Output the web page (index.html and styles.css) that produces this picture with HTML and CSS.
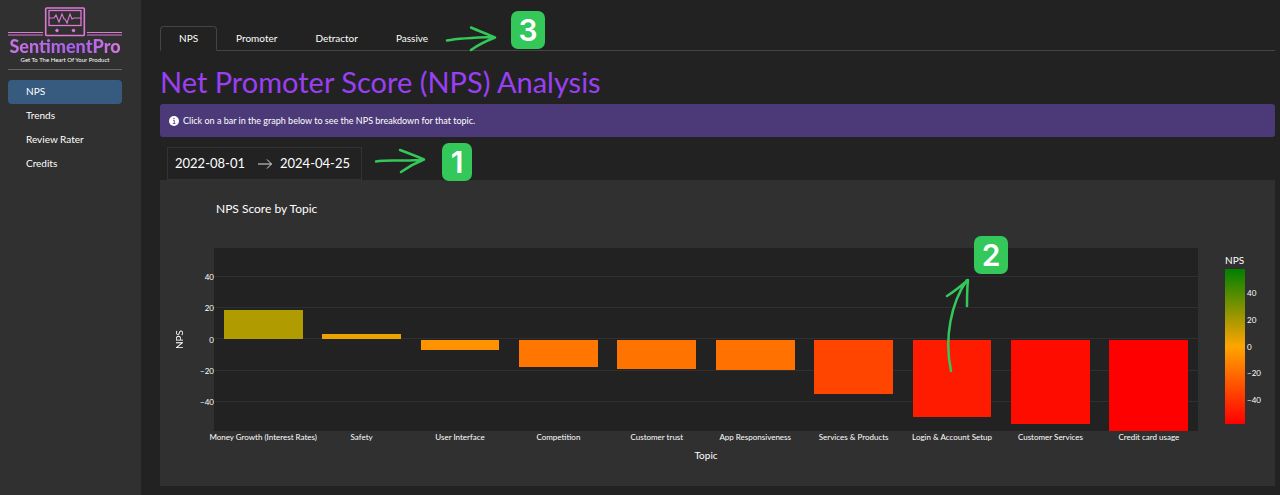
FILE: index.html
```html
<!DOCTYPE html>
<html lang="en">
<head>
<meta charset="utf-8">
<meta name="viewport" content="width=device-width, initial-scale=1">
<title>SentimentPro</title>
<link rel="stylesheet" href="styles.css">
</head>
<body>
<div class="app">
  <aside class="sidebar">
    <div class="logo">
      <svg class="logo-mark" viewBox="0 0 114 30" fill="none" stroke="#dc79d5" aria-hidden="true">
        <path d="M0 25.500h35M0 28h35M79 25.500h35M79 28h35" stroke-width="1.2"/>
        <rect x="37.700" y="1" width="38.600" height="27.500" rx="1" stroke-width="1.6"/>
        <rect x="41" y="3.500" width="32" height="15" stroke-width="1.3"/>
        <path d="M41 11h5l2-3 3 7 3-8 2 5h1l2 4 3-9 2 5 2-1h7" stroke-width="1.1"/>
        <circle cx="49" cy="23.500" r="1.3" fill="#dc79d5"/><circle cx="65.500" cy="23.500" r="1.3" fill="#dc79d5"/>
      </svg>
      <div class="logo-name">SentimentPro</div>
      <div class="logo-tag">Get To The Heart Of Your Product</div>
    </div>
    <nav class="nav">
      <a class="nav-link active" href="#nps">NPS</a>
      <a class="nav-link" href="#trends">Trends</a>
      <a class="nav-link" href="#rater">Review Rater</a>
      <a class="nav-link" href="#credits">Credits</a>
    </nav>
  </aside>

  <main class="main">
    <div class="tabs" role="tablist">
      <button class="tab selected" role="tab" aria-selected="true">NPS</button>
      <button class="tab" role="tab" aria-selected="false">Promoter</button>
      <button class="tab" role="tab" aria-selected="false">Detractor</button>
      <button class="tab" role="tab" aria-selected="false">Passive</button>
      <div class="note note-tabs">
        <svg class="arrow" viewBox="0 0 52 28"><path d="M2 15.500C15 13 32 12.500 49 12M26 2.500C34 6 42 9 50 12.500C41 16 33 20 26 25"/></svg>
        <span class="badge">3</span>
      </div>
    </div>

    <h1 class="title">Net Promoter Score (NPS) Analysis</h1>

    <div class="alert" role="note">
      <svg class="info" viewBox="0 0 10 10" aria-hidden="true"><circle cx="5" cy="5" r="5" fill="#fff"/><path d="M4 4.400h1.300v3M3.800 7.500h2.600" fill="none" stroke="#4b3a77" stroke-width=".8"/><circle cx="5" cy="2.500" r=".7" fill="#4b3a77"/></svg>
      <span>Click on a bar in the graph below to see the NPS breakdown for that topic.</span>
    </div>

    <div class="filters">
      <div class="range">
        <input class="date" type="text" aria-label="Start date" value="2022-08-01">
        <svg class="range-arrow" viewBox="0 0 16 12" aria-hidden="true"><path d="M1 6h13.500M10 1.500L14.500 6 10 10.500"/></svg>
        <input class="date" type="text" aria-label="End date" value="2024-04-25">
      </div>
      <div class="note note-dates">
        <svg class="arrow" viewBox="0 0 52 28"><path d="M2 14.500C15 12 32 15 49 12.500M26 3C34 6 42 9 50 12.500C41 16 34 20 27 25"/></svg>
        <span class="badge narrow">1</span>
      </div>
    </div>

    <section class="chart">
      <h2 class="chart-title">NPS Score by Topic</h2>
      <div class="y-axis">
        <span class="y-name">NPS</span>
        <div class="ticks"><span>40</span><span>20</span><span>0</span><span>−20</span><span>−40</span></div>
      </div>
      <div class="plot">
        <div class="lines"><i></i><i></i><i></i><i></i><i></i></div>
        <div class="bars">
          <div class="slot" style="grid-template-rows:34% 16%"><b class="bar" style="background:#b09c00"></b></div>
          <div class="slot" style="grid-template-rows:47% 3%"><b class="bar" style="background:#eba300"></b></div>
          <div class="slot" style="grid-template-rows:50% 6%"><b class="bar" style="background:#ff9200"></b></div>
          <div class="slot" style="grid-template-rows:50% 15%"><b class="bar" style="background:#ff7600"></b></div>
          <div class="slot" style="grid-template-rows:50% 16%"><b class="bar" style="background:#ff7400"></b></div>
          <div class="slot" style="grid-template-rows:50% 16.6%"><b class="bar" style="background:#ff7100"></b></div>
          <div class="slot" style="grid-template-rows:50% 29.8%"><b class="bar" style="background:#ff4500"></b></div>
          <div class="slot" style="grid-template-rows:50% 42.6%"><b class="bar" style="background:#ff1b00"></b></div>
          <div class="slot" style="grid-template-rows:50% 46.4%"><b class="bar" style="background:#ff0c00"></b></div>
          <div class="slot" style="grid-template-rows:50% 50%"><b class="bar" style="background:#ff0000"></b></div>
        </div>
        <div class="note-bar">
          <svg class="arrow-up" viewBox="0 0 28 98"><path d="M6 94C-1 61 6 26 22 3M2 19C10 14 17 8 23 3C22 12 22 20 22 29"/></svg>
          <span class="badge">2</span>
        </div>
      </div>
      <div class="legend">
        <div class="legend-name">NPS</div>
        <div class="scale">
          <div class="ramp"></div>
          <div class="scale-ticks"><span>40</span><span>20</span><span>0</span><span>−20</span><span>−40</span></div>
        </div>
      </div>
      <div class="topics">
        <span>Money Growth (Interest Rates)</span><span>Safety</span><span>User Interface</span><span>Competition</span><span>Customer trust</span><span>App Responsiveness</span><span>Services &amp; Products</span><span>Login &amp; Account Setup</span><span>Customer Services</span><span>Credit card usage</span>
      </div>
      <div class="x-name">Topic</div>
    </section>
  </main>
</div>
</body>
</html>
```
FILE: styles.css
```css
* { box-sizing: border-box; }
body { margin: 0; background: #222; color: #fff; font: 10px/14px Lato, "Open Sans", sans-serif; }
.app { display: flex; min-height: 100vh; }

.sidebar { flex: none; width: 141px; padding: 7px 19px 0 8px; background: #303030; }
.logo { padding-bottom: 6px; border-bottom: 1px solid #666; text-align: center; }
.logo-mark { display: block; width: 100%; }
.logo-name { font: 900 18px/19px Lato, sans-serif; color: transparent; background: linear-gradient(90deg, #c873df, #a95df0 60%, #d47bd8); -webkit-background-clip: text; background-clip: text; }
.logo-tag { font-size: 6px; line-height: 7px; white-space: nowrap; }
.nav { display: flex; flex-direction: column; margin-top: 10px; }
.nav-link { padding: 4px 18px 6px; border-radius: 4px; color: #fff; text-decoration: none; }
.nav-link.active { background: #375a7f; }

.main { flex: 1; min-width: 0; padding: 26px 5px 9px 19px; }
.tabs { position: relative; display: flex; border-bottom: 1px solid #444; }
.tab { margin-bottom: -1px; padding: 4px 18px 5px; border: 1px solid transparent; border-radius: 4px 4px 0 0; background: none; color: #fff; font: inherit; }
.tab.selected { border-color: #444 #444 #222; }
.title { margin: 13px 0 4px; font-size: 29px; line-height: 36px; font-weight: 400; color: #9b3ff5; }
.alert { display: flex; align-items: center; gap: 4px; padding: 10px 9px 9px; border-radius: 3px; background: #4b3a77; font-size: 9px; }
.info { width: 10px; height: 10px; }

.filters { position: relative; display: flex; padding: 10px 7px 0; }
.range { display: flex; align-items: center; gap: 7px; height: 33px; padding: 0 6px 0 7px; border: 1px solid #333; }
.date { width: 75px; padding: 0 0 2px; border: 0; background: none; color: #fff; font: 13px/18px Lato, sans-serif; }
.range-arrow { width: 16px; height: 12px; fill: none; stroke: #ddd; stroke-width: 1; }

.chart { display: grid; grid-template-columns: 54px 1fr 77px; grid-template-rows: 68px 183px auto auto; padding-bottom: 24px; background: #303030; }
.chart-title { grid-column: 2; margin: 0; padding: 21px 2px 0; font-size: 12px; line-height: 16px; font-weight: 400; }
.y-axis { grid-area: 2 / 1; display: flex; justify-content: space-between; padding-left: 12px; }
.y-name { align-self: center; writing-mode: vertical-rl; transform: rotate(180deg); }
.ticks { display: grid; grid-auto-rows: 17.1%; align-content: center; align-items: center; justify-items: end; font-size: 8px; }
.plot { grid-area: 2 / 2; position: relative; display: grid; background: #222; }
.lines, .bars { grid-area: 1 / 1; height: 183px; }
.lines { display: grid; grid-template-rows: 15.7% repeat(4, 17.1%); }
.lines i { border-bottom: 1px solid #303030; }
.bars { display: flex; }
.slot { flex: 1; display: grid; }
.bar { grid-row: 2; margin: 0 10%; }
.topics { grid-area: 3 / 2; display: flex; font-size: 8px; line-height: 12px; }
.topics span { flex: 1 1 0; width: 0; display: flex; justify-content: center; white-space: nowrap; }
.x-name { grid-area: 4 / 2; margin-top: 5px; text-align: center; }
.legend { grid-area: 2 / 3; padding: 5px 0 0 27px; }
.legend-name { height: 16px; }
.scale { display: flex; gap: 2px; height: 155px; }
.ramp { width: 20px; background: linear-gradient(green, orange 50%, red); }
.scale-ticks { display: grid; grid-auto-rows: 17.2%; align-content: center; align-items: center; font-size: 8px; }

/* Hand-drawn callouts floating over the dashboard */
.note { position: absolute; display: flex; gap: 14px; pointer-events: none; }
.note-tabs { left: 285px; top: -15px; }
.note-dates { left: 214px; top: 6px; gap: 16px; }
.badge { display: grid; place-items: center; width: 34px; height: 38px; border-radius: 7px; background: #34c759; color: #fff; font: 600 30px/38px Inter, sans-serif; }
.badge.narrow { width: 30px; }
.arrow { width: 52px; height: 28px; }
.note-tabs .arrow { margin-top: 14px; }
.note-dates .arrow { margin-top: 4px; }
.arrow path, .arrow-up path { fill: none; stroke: #34c759; stroke-width: 2.5; stroke-linecap: round; stroke-linejoin: round; }
.note-bar { position: absolute; left: 74%; top: -12px; width: 66px; pointer-events: none; }
.note-bar .badge { margin-left: 32px; }
.arrow-up { position: absolute; left: 3px; top: 41px; width: 28px; height: 98px; }
```
